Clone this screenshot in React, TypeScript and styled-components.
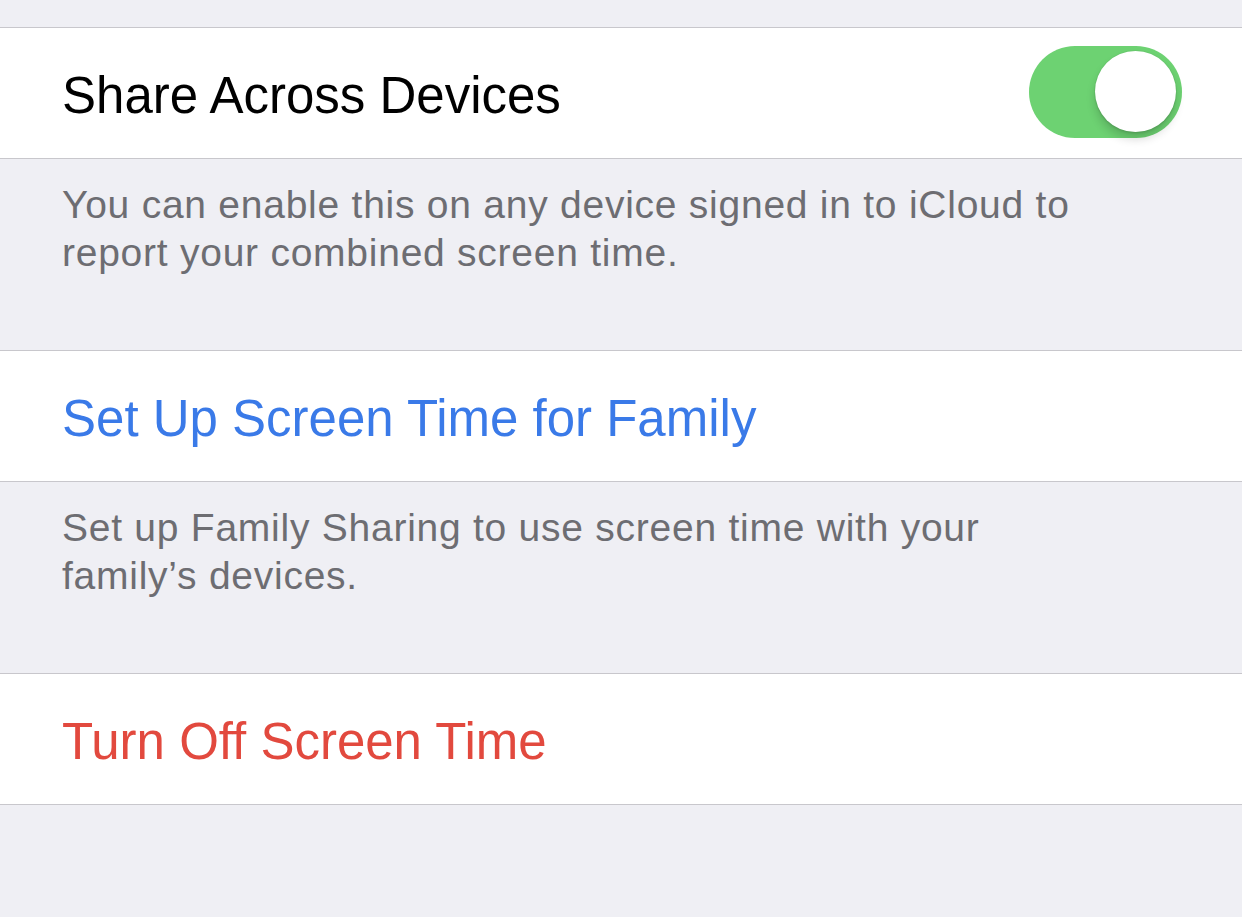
import React from "react";
import styled, { createGlobalStyle } from "styled-components";

const GlobalStyle = createGlobalStyle`
  html, body {
    margin: 0;
    padding: 0;
    background: #efeff4;
  }
  body {
    font-family: "Liberation Sans", Arial, sans-serif;
    -webkit-font-smoothing: antialiased;
  }
`;

const Page = styled.div`
  width: 1242px;
  height: 917px;
  overflow: hidden;
  background: #efeff4;
  display: flex;
  flex-direction: column;
`;

const TopSpacer = styled.div`
  height: 27px;
`;

const Group = styled.div`
  background: #ffffff;
  border-top: 1px solid #c8c7cc;
  border-bottom: 1px solid #c8c7cc;
`;

const Row = styled.div`
  height: 130px;
  box-sizing: border-box;
  padding: 0 60px 0 62px;
  display: flex;
  align-items: center;
  justify-content: space-between;
`;

type Tone = "default" | "blue" | "red";

const toneColors: Record<Tone, string> = {
  default: "#000000",
  blue: "#3a7ae8",
  red: "#e2493e",
};

const Label = styled.span<{ $tone?: Tone }>`
  padding-top: 4px;
  font-size: 51px;
  line-height: 1;
  color: ${({ $tone = "default" }) => toneColors[$tone]};
`;

const Footer = styled.div`
  height: 191px;
  box-sizing: border-box;
  padding: 22px 130px 0 62px;
  font-size: 39px;
  line-height: 48px;
  letter-spacing: 0.75px;
  color: #6d6d72;
`;

const Track = styled.div<{ $on: boolean }>`
  width: 153px;
  height: 92px;
  margin-top: -3px;
  box-sizing: border-box;
  padding: 6px;
  border-radius: 46px;
  background: ${({ $on }) => ($on ? "#6dd272" : "#e5e5ea")};
  display: flex;
  justify-content: ${({ $on }) => ($on ? "flex-end" : "flex-start")};
  align-items: center;
`;

const Knob = styled.div`
  width: 81px;
  height: 81px;
  border-radius: 50%;
  background: #ffffff;
  box-shadow: 0 0 0 1px rgba(0, 0, 0, 0.04), 0 7px 10px rgba(0, 0, 0, 0.16),
    0 2px 2px rgba(0, 0, 0, 0.08);
`;

const Toggle = ({ on }: { on: boolean }) => (
  <Track $on={on}>
    <Knob />
  </Track>
);

const App = () => (
  <>
    <GlobalStyle />
    <Page>
      <TopSpacer />
      <Group>
        <Row>
          <Label>Share Across Devices</Label>
          <Toggle on />
        </Row>
      </Group>
      <Footer>
        You can enable this on any device signed in to iCloud to report your
        combined screen time.
      </Footer>
      <Group>
        <Row>
          <Label $tone="blue">Set Up Screen Time for Family</Label>
        </Row>
      </Group>
      <Footer>
        Set up Family Sharing to use screen time with your family’s devices.
      </Footer>
      <Group>
        <Row>
          <Label $tone="red">Turn Off Screen Time</Label>
        </Row>
      </Group>
    </Page>
  </>
);

export default App;
